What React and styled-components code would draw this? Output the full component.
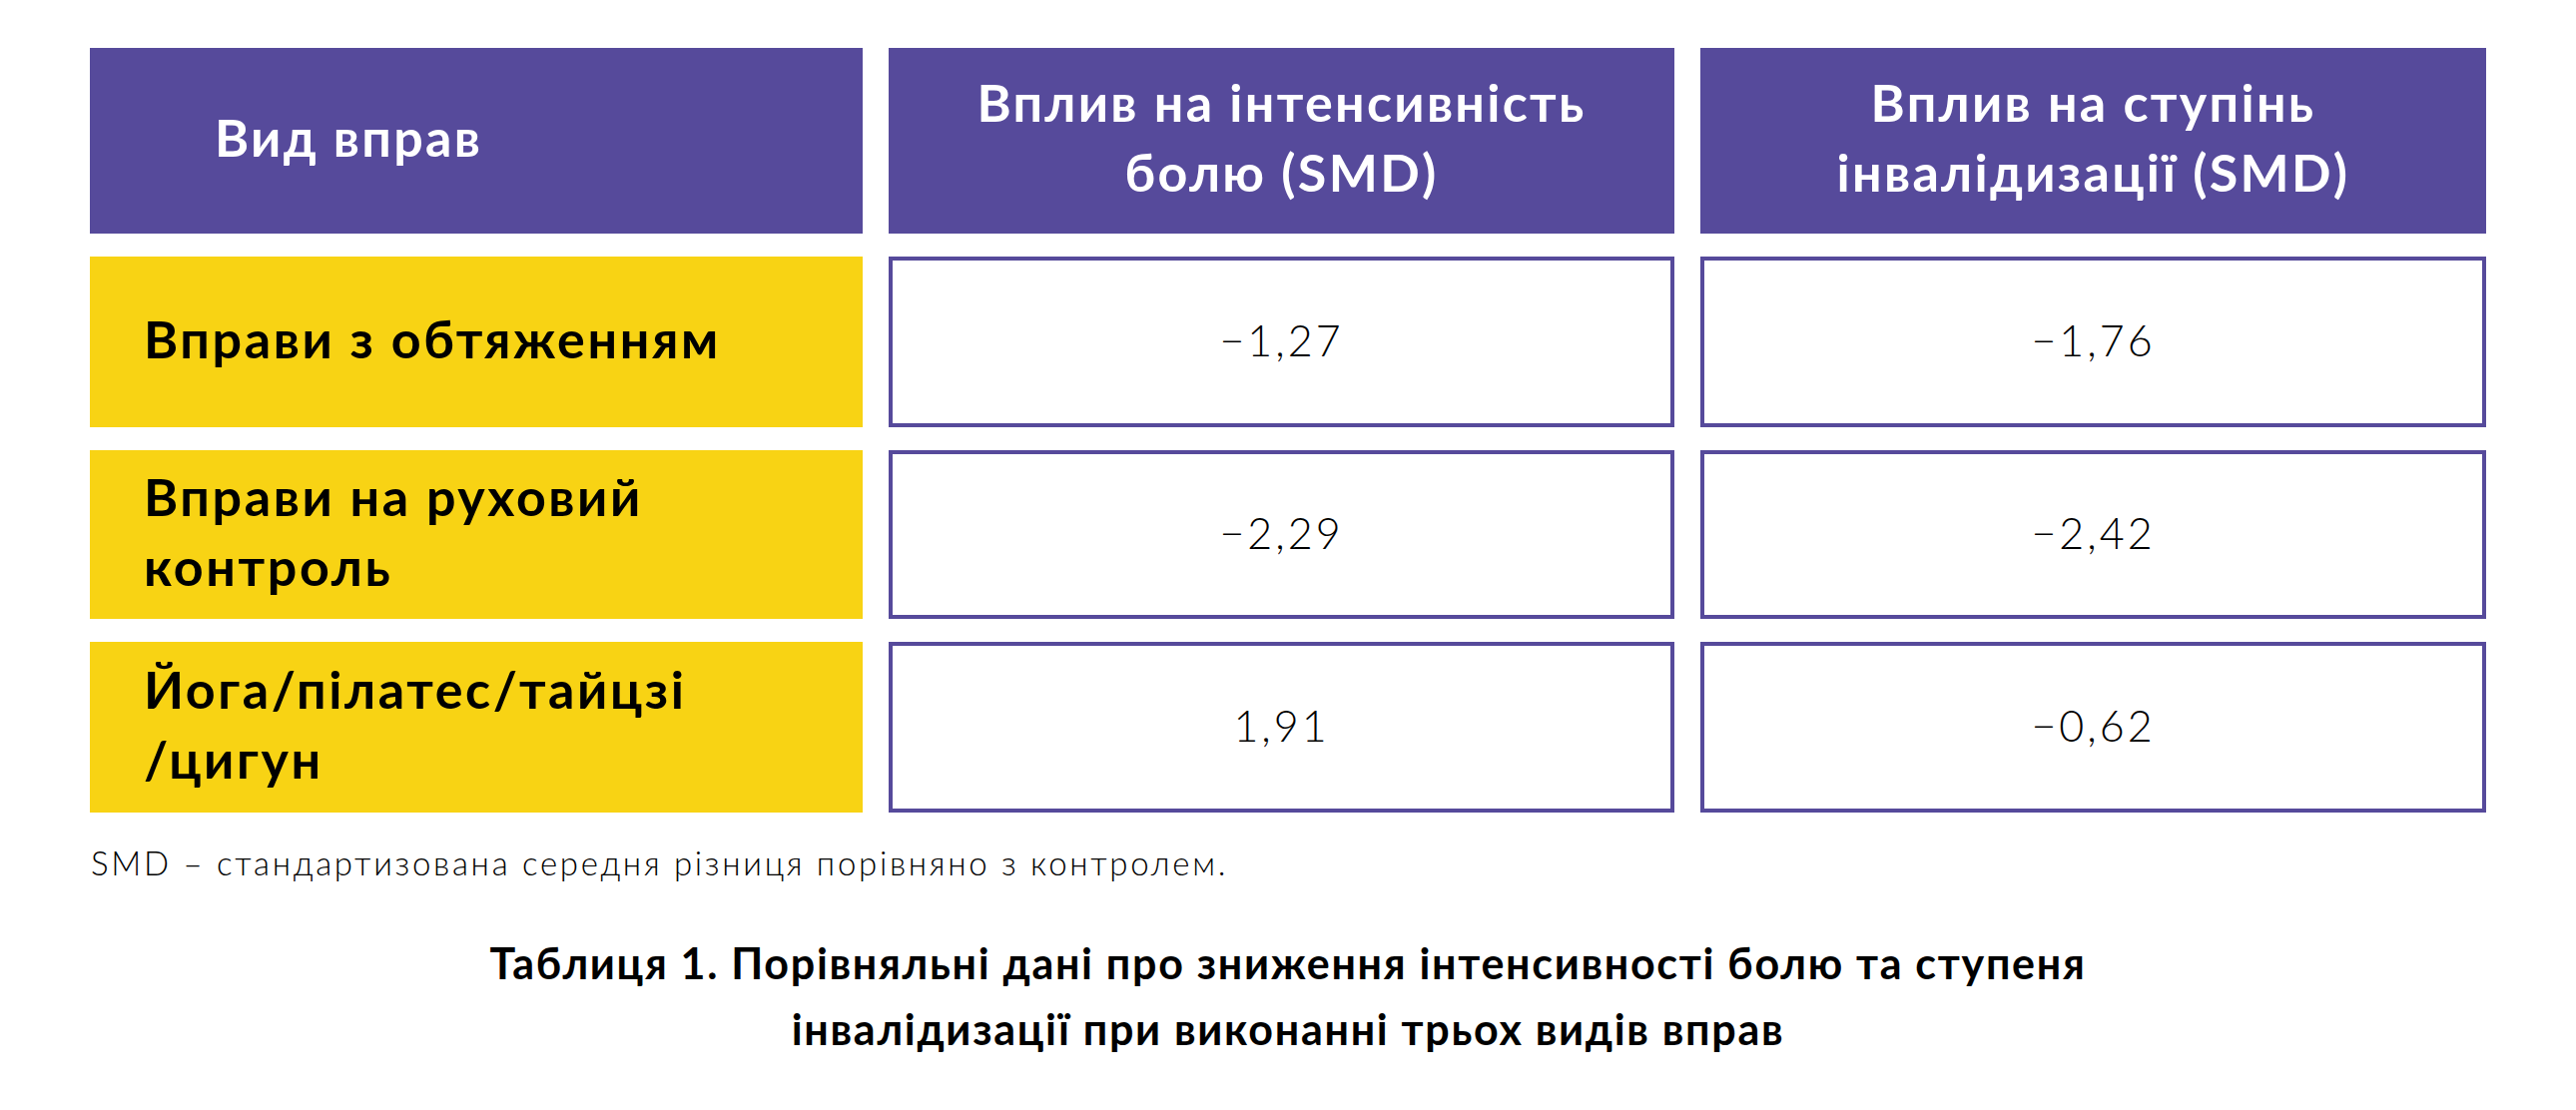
import React from 'react';
import styled, { createGlobalStyle } from 'styled-components';

const Global = createGlobalStyle`
    html, body {
        margin: 0;
        padding: 0;
        background: #ffffff;
        font-family: Lato, "Open Sans", "DejaVu Sans", sans-serif;
    }
`;

const Page = styled.div`
    width: 2580px;
    box-sizing: border-box;
    padding: 48px 90px 0 90px;
`;

const Table = styled.div`
    display: grid;
    grid-template-columns: 774px 1fr 1fr;
    grid-template-rows: 186px 171px 169px 171px;
    column-gap: 26px;
    row-gap: 23px;
`;

const HeadCell = styled.div`
    background: #564a9b;
    color: #ffffff;
    font-weight: 700;
    font-size: 52px;
    line-height: 70px;
    letter-spacing: 2.3px;
    display: flex;
    align-items: center;
    justify-content: ${p => (p.$left ? 'flex-start' : 'center')};
    text-align: ${p => (p.$left ? 'left' : 'center')};
    padding: ${p => (p.$left ? '0 0 8px 125px' : '0 20px 8px')};
    box-sizing: border-box;
`;

const LabelCell = styled.div`
    background: #f8d314;
    color: #000000;
    font-weight: 700;
    font-size: 52px;
    line-height: 70px;
    letter-spacing: 2.6px;
    display: flex;
    align-items: center;
    padding: 0 20px 8px 54px;
    box-sizing: border-box;
    white-space: pre-line;
`;

const ValueCell = styled.div`
    border: 4px solid #564a9b;
    background: #ffffff;
    color: #000000;
    font-weight: 300;
    font-size: 43px;
    letter-spacing: 3px;
    display: flex;
    align-items: center;
    justify-content: center;
    padding-bottom: 5px;
    box-sizing: border-box;
`;

const Note = styled.p`
    margin: 30px 0 0 1px;
    font-weight: 300;
    font-size: 33px;
    line-height: 40px;
    letter-spacing: 2.7px;
    color: #000000;
`;

const Caption = styled.p`
    margin: 48px 0 0 0;
    font-weight: 700;
    font-size: 43px;
    line-height: 66px;
    letter-spacing: 1.7px;
    text-align: center;
    color: #000000;
`;

const rows = [
    { label: 'Вправи з обтяженням', pain: '−1,27', disability: '−1,76' },
    { label: 'Вправи на руховий\nконтроль', pain: '−2,29', disability: '−2,42' },
    { label: 'Йога/пілатес/тайцзі\n/цигун', pain: '1,91', disability: '−0,62' },
];

export default function App() {
    return (
        <Page>
            <Global />
            <Table>
                <HeadCell $left>Вид вправ</HeadCell>
                <HeadCell>Вплив на інтенсивність<br />болю (SMD)</HeadCell>
                <HeadCell>Вплив на ступінь<br />інвалідизації (SMD)</HeadCell>
                {rows.map(r => (
                    <React.Fragment key={r.label}>
                        <LabelCell>{r.label}</LabelCell>
                        <ValueCell>{r.pain}</ValueCell>
                        <ValueCell>{r.disability}</ValueCell>
                    </React.Fragment>
                ))}
            </Table>
            <Note>SMD – стандартизована середня різниця порівняно з контролем.</Note>
            <Caption>
                Таблиця 1. Порівняльні дані про зниження інтенсивності болю та ступеня<br />
                інвалідизації при виконанні трьох видів вправ
            </Caption>
        </Page>
    );
}
